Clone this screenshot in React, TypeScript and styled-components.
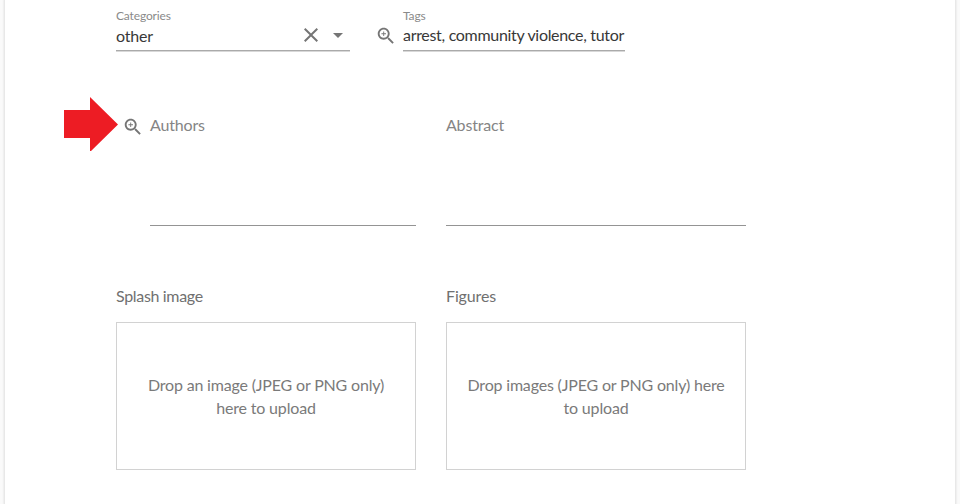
import React from "react";
import styled, { createGlobalStyle } from "styled-components";

const Global = createGlobalStyle`
  *{box-sizing:border-box}
  body{margin:0;background:#fafafa;font-family:Lato,sans-serif;font-size:16px;color:#383838;overflow:hidden}
`;
const Card = styled.main`
  width:950px;height:504px;margin-left:5px;padding-left:111px;background:#fff;
  box-shadow:0 0 0 1px #e8e8e8,0 0 2px 1px #ddd;display:flex;flex-direction:column;
`;
const FieldsRow = styled.section`display:flex;height:52px;align-items:flex-end;`;
const Field = styled.div<{ $w: number }>`
  width:${p => p.$w}px;height:44px;border-bottom:1px solid #d8d8d8;box-shadow:inset 0 -1px #aaa;display:flex;flex-direction:column;
`;
const Caption = styled.label`font-size:12px;line-height:15px;color:#8a8a8a;letter-spacing:-.15px;`;
const Value = styled.div`display:flex;align-items:center;height:25px;line-height:25px;white-space:nowrap;`;
const Text = styled.span<{ $grow?: boolean; $ls?: number; $up?: number }>`
  flex:${p => p.$grow ? 1 : "none"};letter-spacing:${p => p.$ls ?? 0}px;padding-bottom:${p => p.$up ?? 0}px;
`;
const Icon = styled.svg<{ $w: number; $ml?: number; $mt?: number }>`
  display:block;flex:none;width:${p => p.$w}px;height:${p => p.$w}px;
  margin-left:${p => p.$ml ?? 0}px;margin-top:${p => p.$mt ?? 0}px;
`;
const Lead = styled.div`width:53px;height:44px;padding:17px 0 0 25px;`;
const AreaRow = styled.section`display:flex;height:130px;margin:44px 0 0 -52px;`;
const Area = styled.div<{ $w: number; $ml: number }>`
  width:${p => p.$w}px;height:130px;margin-left:${p => p.$ml}px;padding-top:19px;
  border-bottom:1px solid #949494;color:#858585;line-height:20px;letter-spacing:-.18px;
`;
const Uploads = styled.section`display:flex;gap:30px;margin-top:60px;`;
const Upload = styled.div`width:300px;`;
const Heading = styled.div<{ $ls: number }>`line-height:20px;height:36px;color:#707070;letter-spacing:${p => p.$ls}px;`;
const Drop = styled.div`
  height:148px;border:1px solid #d2d2d2;display:flex;align-items:center;justify-content:center;
  text-align:center;line-height:23px;padding:0 16px 1px;color:#7a7a7a;letter-spacing:-.18px;
`;

const ZoomIn = ({ ml = 0, mt = 0 }: { ml?: number; mt?: number }) => (
  <Icon $w={22} $ml={ml} $mt={mt} viewBox="0 0 24 24" fill="#757575">
    <path d="M15.5 14h-.79l-.28-.27C15.41 12.59 16 11.11 16 9.5 16 5.91 13.09 3 9.5 3S3 5.91 3 9.5 5.91 16 9.5 16c1.61 0 3.09-.59 4.23-1.57l.27.28v.79l5 4.99L20.49 19l-4.99-5zm-6 0C7.01 14 5 11.99 5 9.5S7.01 5 9.5 5 14 7.01 14 9.5 11.99 14 9.5 14zm2.5-4h-2v2H9v-2H7V9h2V7h1v2h2v1z" />
  </Icon>
);

export default function App() {
  return (
    <>
      <Global />
      <Card>
        <FieldsRow>
          <Field $w={234}>
            <Caption>Categories</Caption>
            <Value>
              <Text $grow $ls={-.2} $up={1}>other</Text>
              <Icon $w={24} $mt={-1} viewBox="0 0 24 24" fill="#757575"><path d="M19 6.41L17.59 5 12 10.59 6.41 5 5 6.41 10.59 12 5 17.59 6.41 19 12 13.41 17.59 19 19 17.59 13.41 12z" /></Icon>
              <Icon $w={24} $ml={3} $mt={-1} viewBox="0 0 24 24" fill="#757575"><path d="M7 10l5 5 5-5z" /></Icon>
            </Value>
          </Field>
          <Lead><ZoomIn /></Lead>
          <Field $w={222}>
            <Caption>Tags</Caption>
            <Value><Text $ls={-.31} $up={2}>arrest, community violence, tutor</Text></Value>
          </Field>
        </FieldsRow>
        <AreaRow>
          <Icon $w={55} viewBox="0 0 55 55"><path d="M0 14H26V1L54 28.500 26 56V42H0z" fill="#ed1c24" /></Icon>
          <ZoomIn ml={3} mt={20} />
          <Area $w={266} $ml={6}>Authors</Area>
          <Area $w={300} $ml={30}>Abstract</Area>
        </AreaRow>
        <Uploads>
          <Upload><Heading $ls={-.33}>Splash image</Heading><Drop>Drop an image (JPEG or PNG only) here to upload</Drop></Upload>
          <Upload><Heading $ls={-.12}>Figures</Heading><Drop>Drop images (JPEG or PNG only) here to upload</Drop></Upload>
        </Uploads>
      </Card>
    </>
  );
}
